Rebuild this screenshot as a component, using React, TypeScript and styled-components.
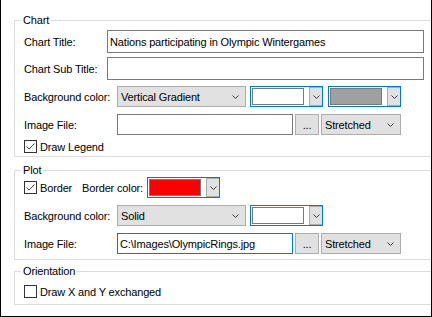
import React from "react";
import styled, { createGlobalStyle } from "styled-components";

const GlobalStyle = createGlobalStyle`
  body {
    margin: 0;
    background: #ffffff;
    font-family: "Liberation Sans", Arial, sans-serif;
    font-size: 11px;
    letter-spacing: -0.15px;
    color: #000000;
  }
`;

const Chevron = () => (
  <svg width="7" height="4" viewBox="0 0 7 4">
    <polyline points="0.5,0.5 3.5,3.5 6.5,0.5" fill="none" stroke="#3c3c3c" strokeWidth="1" />
  </svg>
);

const Tick = () => (
  <svg width="11" height="11" viewBox="0 0 11 11">
    <polyline points="1.5,5.5 4,8 9.5,2.5" fill="none" stroke="#4a4a4a" strokeWidth="1" />
  </svg>
);

const App = () => {
  return (
    <>
      <GlobalStyle />
      <Frame>
        <Group $gapTop={14} $padTop={3} $padBottom={3}>
          <Caption>Chart</Caption>
          <Row $height={23}>
            <Label $width={83}>Chart Title:</Label>
            <TextBox $width={317} readOnly value="Nations participating in Olympic Wintergames" />
          </Row>
          <Row $height={23} $gap={4}>
            <Label $width={83}>Chart Sub Title:</Label>
            <TextBox $width={317} readOnly value="" />
          </Row>
          <Row $height={21} $gap={6}>
            <Label $width={93}>Background color:</Label>
            <Combo $width={129}>
              <span>Vertical Gradient</span>
              <Chevron />
            </Combo>
            <Picker $space={4}>
              <Swatch $color="#ffffff" />
              <DropButton>
                <Chevron />
              </DropButton>
            </Picker>
            <Picker $space={5}>
              <Swatch $color="#a0a0a0" />
              <DropButton>
                <Chevron />
              </DropButton>
            </Picker>
          </Row>
          <Row $height={21} $gap={7}>
            <Label $width={93}>Image File:</Label>
            <TextBox $width={176} readOnly value="" />
            <Dots>...</Dots>
            <Combo $width={80} $space={2}>
              <span>Stretched</span>
              <Chevron />
            </Combo>
          </Row>
          <Row $height={13} $gap={5}>
            <CheckField>
              <Box>
                <Tick />
              </Box>
              Draw Legend
            </CheckField>
          </Row>
        </Group>

        <Group $gapTop={7} $padTop={0} $padBottom={5}>
          <Caption>Plot</Caption>
          <Row $height={21}>
            <CheckField $width={58}>
              <Box>
                <Tick />
              </Box>
              Border
            </CheckField>
            <Label $width={65}>Border color:</Label>
            <Picker>
              <Swatch $color="#ff0000" />
              <DropButton>
                <Chevron />
              </DropButton>
            </Picker>
          </Row>
          <Row $height={21} $gap={7}>
            <Label $width={93}>Background color:</Label>
            <Combo $width={129}>
              <span>Solid</span>
              <Chevron />
            </Combo>
            <Picker $space={4}>
              <Swatch $color="#ffffff" />
              <DropButton>
                <Chevron />
              </DropButton>
            </Picker>
          </Row>
          <Row $height={21} $gap={7}>
            <Label $width={93}>Image File:</Label>
            <TextBox $width={176} $focused readOnly value="C:\Images\OlympicRings.jpg" />
            <Dots>...</Dots>
            <Combo $width={80} $space={2}>
              <span>Stretched</span>
              <Chevron />
            </Combo>
          </Row>
        </Group>

        <Group $gapTop={5} $padTop={7} $padBottom={6}>
          <Caption>Orientation</Caption>
          <Row $height={13}>
            <CheckField>
              <Box />
              Draw X and Y exchanged
            </CheckField>
          </Row>
        </Group>
      </Frame>
    </>
  );
};

export default App;

const Frame = styled.div`
  width: 432px;
  height: 317px;
  box-sizing: border-box;
  border: 1px solid #000000;
  border-top: none;
  overflow: hidden;
  background: #ffffff;
  display: flow-root;
`;

const Group = styled.fieldset<{ $gapTop: number; $padTop: number; $padBottom: number }>`
  margin: ${(p) => p.$gapTop}px -40px 0 13px;
  padding: ${(p) => p.$padTop}px 0 ${(p) => p.$padBottom}px 9px;
  border: 1px solid #dcdcdc;
  min-width: 0;
`;

const Caption = styled.legend`
  margin-left: -3px;
  padding: 0 2px;
  line-height: 13px;
  font-size: 11px;
`;

const Row = styled.div<{ $height: number; $gap?: number }>`
  display: flex;
  align-items: center;
  height: ${(p) => p.$height}px;
  margin-top: ${(p) => p.$gap ?? 0}px;
  white-space: nowrap;
`;

const Label = styled.span<{ $width: number }>`
  width: ${(p) => p.$width}px;
  flex: none;
`;

const TextBox = styled.input<{ $width: number; $focused?: boolean }>`
  width: ${(p) => p.$width}px;
  height: 100%;
  box-sizing: border-box;
  margin: 0;
  padding: 0 2px;
  border: 1px solid ${(p) => (p.$focused ? "#0078d7" : "#7a7a7a")};
  outline: none;
  background: #ffffff;
  font-family: "Liberation Sans", Arial, sans-serif;
  font-size: 11px;
  letter-spacing: -0.15px;
  color: #000000;
  flex: none;
`;

const Combo = styled.div<{ $width: number; $space?: number }>`
  width: ${(p) => p.$width}px;
  height: 100%;
  box-sizing: border-box;
  margin-left: ${(p) => p.$space ?? 0}px;
  padding: 0 6px 0 3px;
  border: 1px solid #adadad;
  background: #e1e1e1;
  display: flex;
  align-items: center;
  justify-content: space-between;
  flex: none;
`;

const Dots = styled.div`
  width: 24px;
  height: 100%;
  box-sizing: border-box;
  margin-left: 2px;
  border: 1px solid #adadad;
  background: #e1e1e1;
  display: flex;
  align-items: flex-end;
  justify-content: center;
  padding-bottom: 3px;
  line-height: 11px;
  flex: none;
`;

const Picker = styled.div<{ $space?: number }>`
  width: 73px;
  height: 100%;
  box-sizing: border-box;
  margin-left: ${(p) => p.$space ?? 0}px;
  padding: 1px 0 1px 1px;
  border: 1px solid #0078d7;
  display: flex;
  align-items: stretch;
  gap: 5px;
  flex: none;
`;

const Swatch = styled.div<{ $color: string }>`
  width: 52px;
  box-sizing: border-box;
  border: 1px solid #7a7a7a;
  background: ${(p) => p.$color};
`;

const DropButton = styled.div`
  flex: 1;
  margin: -1px 0;
  border: 1px solid #adadad;
  border-right: none;
  background: #e1e1e1;
  display: flex;
  align-items: center;
  justify-content: center;
`;

const CheckField = styled.label<{ $width?: number }>`
  display: flex;
  align-items: center;
  gap: 3px;
  width: ${(p) => (p.$width ? `${p.$width}px` : "auto")};
  flex: none;
`;

const Box = styled.span`
  width: 13px;
  height: 13px;
  box-sizing: border-box;
  border: 1px solid #333333;
  background: #ffffff;
  display: flex;
  align-items: center;
  justify-content: center;
`;
